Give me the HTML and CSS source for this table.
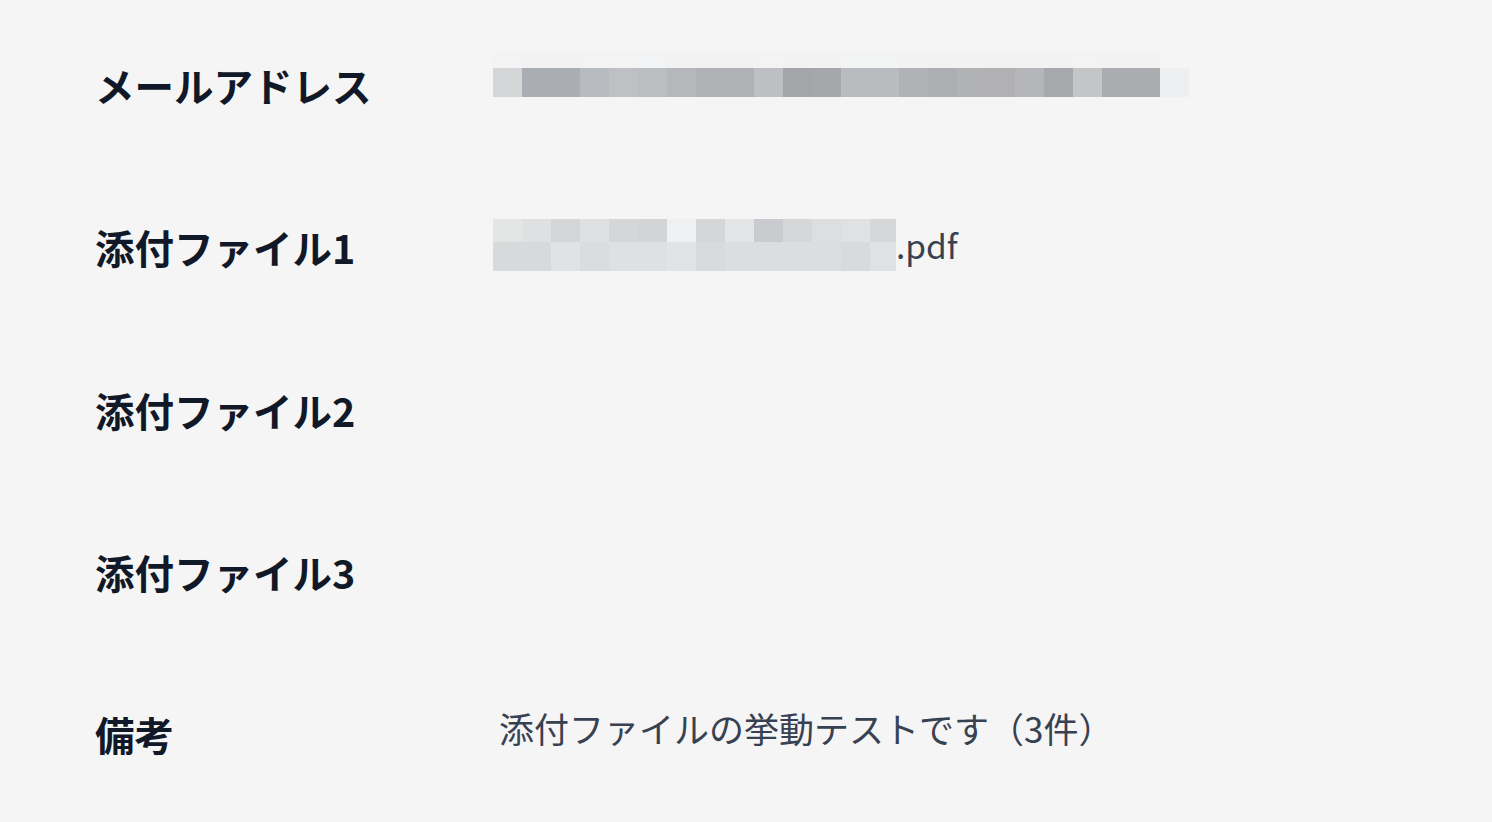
FILE: index.html
```html
<!DOCTYPE html>
<html lang="ja">
<head>
<meta charset="utf-8">
<title>詳細</title>
<link rel="stylesheet" href="styles.css">
</head>
<body>
<div class="list">
  <div class="row">
    <div class="label">メールアドレス</div>
    <div class="value email">
      <div class="mosaic">
        <div class="mrow top">
          <span style="background:#f3f3f3"></span><span style="background:#f2f2f2"></span><span style="background:#f2f2f2"></span><span style="background:#f3f3f3"></span><span style="background:#f3f3f3"></span><span style="background:#f2f3f4"></span><span style="background:#f2f2f2"></span><span style="background:#f2f2f2"></span><span style="background:#f2f2f2"></span><span style="background:#f3f3f3"></span><span style="background:#f2f2f2"></span><span style="background:#f2f2f2"></span><span style="background:#f2f3f3"></span><span style="background:#f2f3f3"></span><span style="background:#f2f2f2"></span><span style="background:#f2f2f2"></span><span style="background:#f2f2f2"></span><span style="background:#f2f2f2"></span><span style="background:#f2f2f2"></span><span style="background:#f2f2f2"></span><span style="background:#f3f3f3"></span><span style="background:#f2f2f2"></span><span style="background:#f2f2f2"></span><span style="background:#f5f5f5"></span>
        </div>
        <div class="mrow bottom">
          <span style="background:#d4d5d7"></span><span style="background:#aaadb1"></span><span style="background:#aaadb1"></span><span style="background:#b8bbbf"></span><span style="background:#bfc0c3"></span><span style="background:#bcbdc1"></span><span style="background:#b5b7bb"></span><span style="background:#afb1b5"></span><span style="background:#afb1b5"></span><span style="background:#bebfc2"></span><span style="background:#a3a5a9"></span><span style="background:#a5a7ab"></span><span style="background:#babbbe"></span><span style="background:#babbbe"></span><span style="background:#b0b2b6"></span><span style="background:#adaeb2"></span><span style="background:#b0b2b4"></span><span style="background:#b1b1b4"></span><span style="background:#b4b6b9"></span><span style="background:#a6a8ac"></span><span style="background:#c4c5c6"></span><span style="background:#aaacb0"></span><span style="background:#aaacb0"></span><span style="background:#eeeff1"></span>
        </div>
      </div>
    </div>
  </div>
  <div class="row">
    <div class="label">添付ファイル1</div>
    <div class="value file">
      <div class="mosaic">
        <div class="mrow top2">
          <span style="background:#e4e5e5"></span><span style="background:#dfe0e1"></span><span style="background:#d4d5d7"></span><span style="background:#dfe0e2"></span><span style="background:#d5d6d8"></span><span style="background:#d3d4d6"></span><span style="background:#eff0f2"></span><span style="background:#d5d6d8"></span><span style="background:#e4e5e7"></span><span style="background:#c9cbce"></span><span style="background:#d6d7d9"></span><span style="background:#dddee0"></span><span style="background:#e0e1e3"></span><span class="last" style="background:#d6d7d9"></span>
        </div>
        <div class="mrow bottom2">
          <span style="background:#d8d9db"></span><span style="background:#d8d9db"></span><span style="background:#e1e2e4"></span><span style="background:#dbdcde"></span><span style="background:#dfe0e2"></span><span style="background:#dfe0e2"></span><span style="background:#e2e3e5"></span><span style="background:#d9dadc"></span><span style="background:#dcdde0"></span><span style="background:#dcdde0"></span><span style="background:#dcdde0"></span><span style="background:#dcdde0"></span><span style="background:#d9dadc"></span><span class="last" style="background:#e0e1e3"></span>
        </div>
      </div>
      <span class="ext">.pdf</span>
    </div>
  </div>
  <div class="row">
    <div class="label">添付ファイル2</div>
    <div class="value"></div>
  </div>
  <div class="row">
    <div class="label">添付ファイル3</div>
    <div class="value"></div>
  </div>
  <div class="row">
    <div class="label">備考</div>
    <div class="value note">添付ファイルの挙動テストです（3件）</div>
  </div>
</div>
</body>
</html>
```

FILE: styles.css
```css
html, body {
  margin: 0;
  padding: 0;
  background: #f5f5f5;
}

body {
  font-family: "Noto Sans CJK JP", "Noto Sans", sans-serif;
  width: 1492px;
  height: 822px;
  overflow: hidden;
}

.list {
  padding: 6px 0 0 95px;
}

.row {
  display: grid;
  grid-template-columns: 398px 1fr;
  height: 162.25px;
  align-items: center;
}

.label {
  font-size: 39.5px;
  font-weight: 700;
  color: #111827;
  line-height: 1.5;
  margin-top: -5px;
}

.value {
  color: #374151;
  font-size: 35px;
  line-height: 1.5;
}

.mosaic {
  display: flex;
  flex-direction: column;
}

.mrow {
  display: flex;
}

.mrow span {
  display: block;
  width: 29px;
  flex: none;
}

.email {
  align-self: start;
  margin-top: 46px;
}

.top { height: 16px; }
.bottom { height: 29px; }

.file {
  display: flex;
  align-items: center;
  align-self: start;
  margin-top: 51px;
}

.top2 { height: 23px; }
.bottom2 { height: 29px; }

.mrow span.last { width: 26px; }

.ext {
  font-size: 33.5px;
  line-height: 1;
  margin-top: -2px;
}

.note {
  padding-left: 6px;
  margin-top: -15px;
}
```
